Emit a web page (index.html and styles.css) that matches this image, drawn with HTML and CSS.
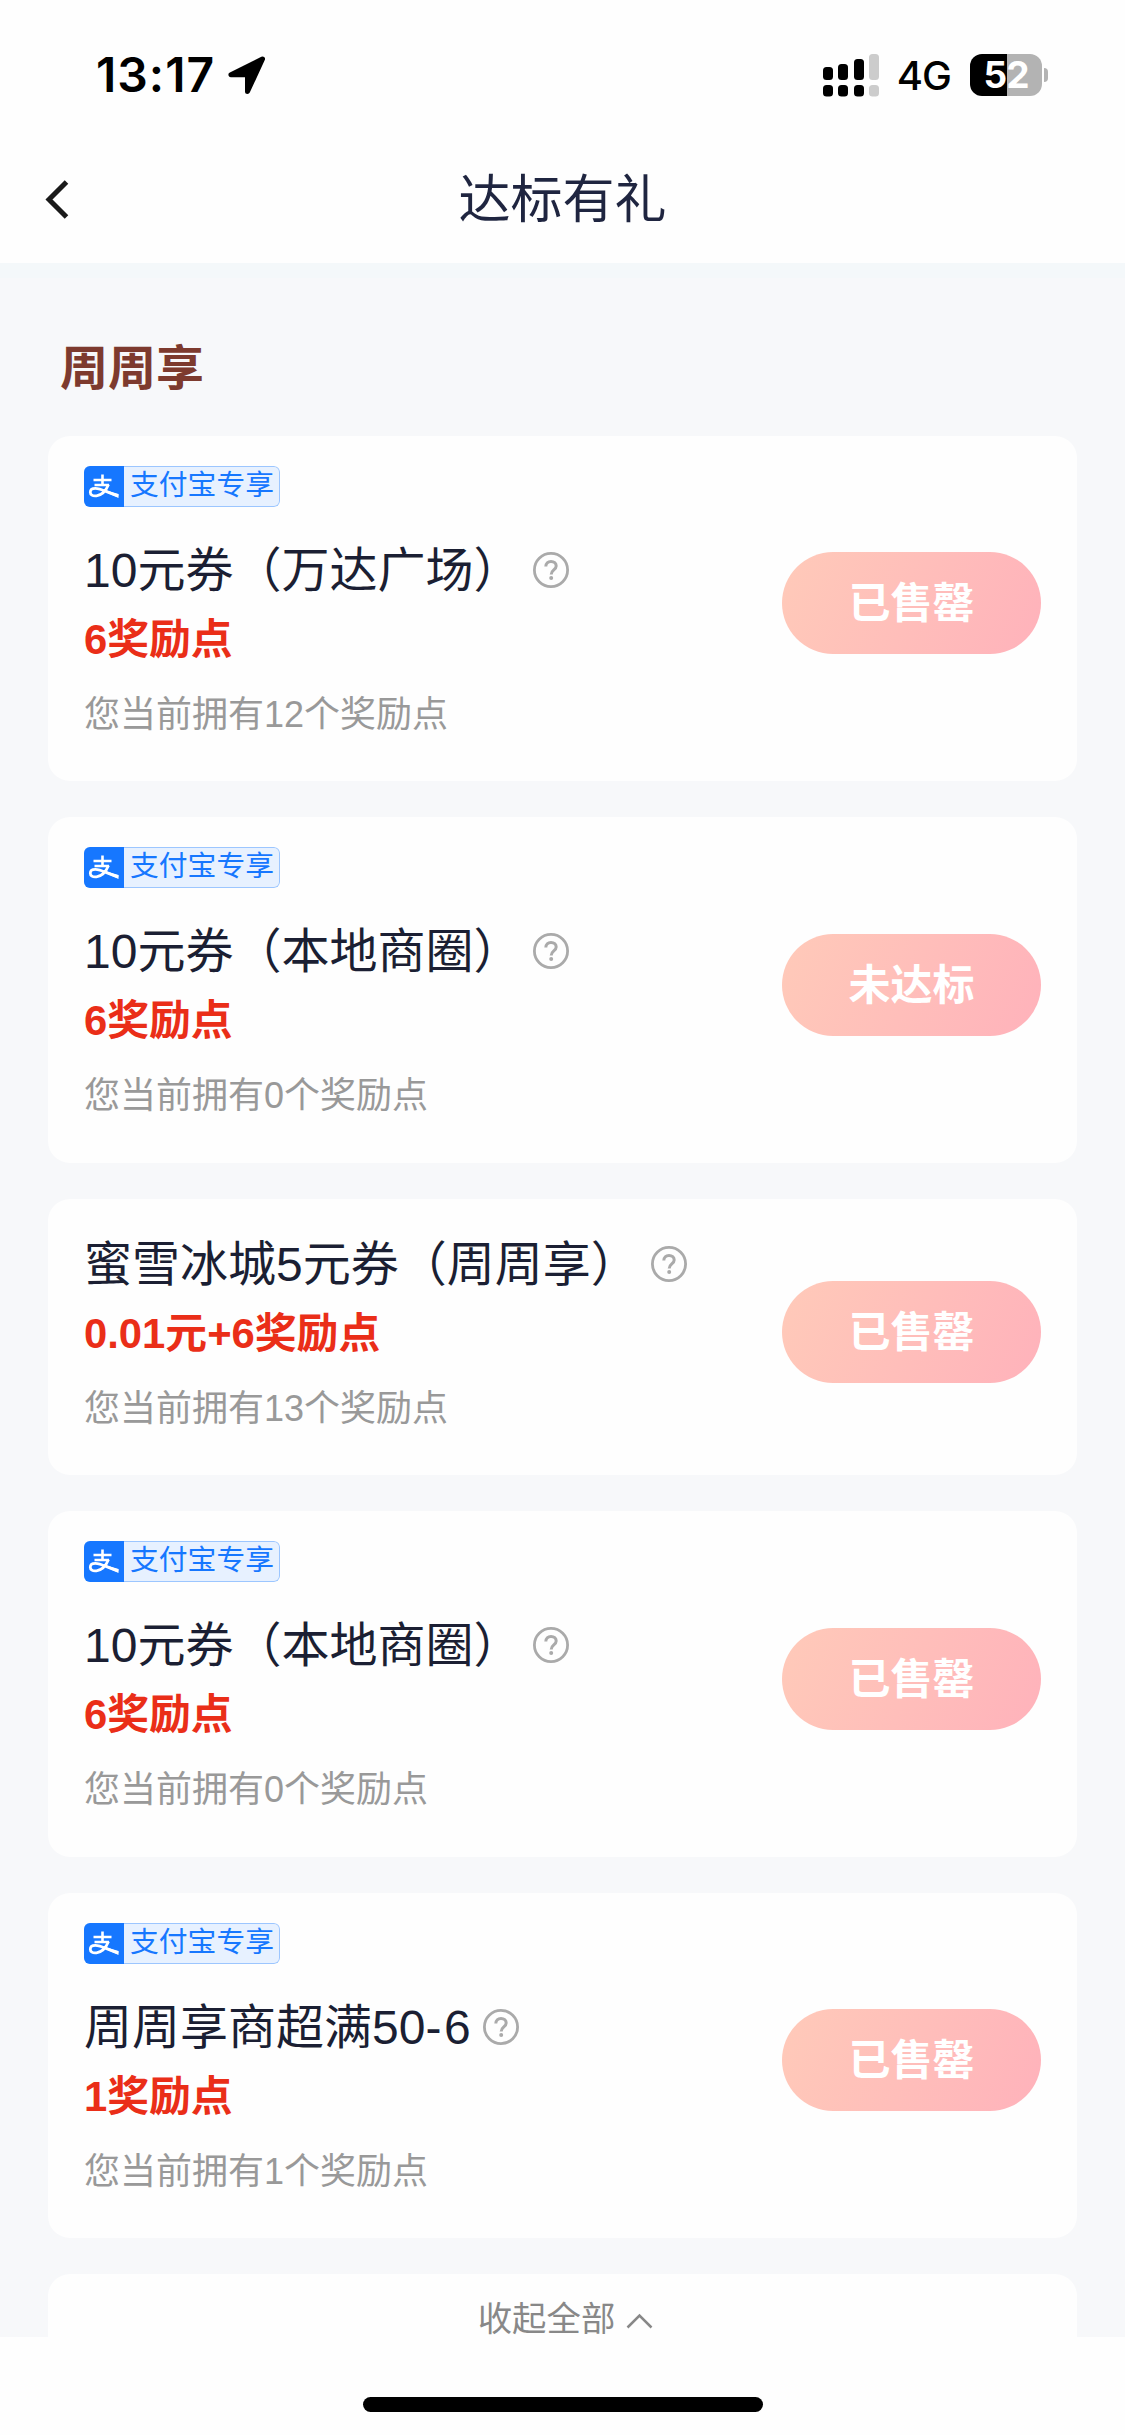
FILE: index.html
```html
<!DOCTYPE html>
<html lang="zh-CN">
<head>
<meta charset="utf-8">
<title>达标有礼</title>
<link rel="stylesheet" href="styles.css">
</head>
<body>
<svg class="defs" width="0" height="0">
  <symbol id="help" viewBox="0 0 36 36"><circle cx="18" cy="18" r="16.6" fill="none" stroke="#aaa" stroke-width="2.8"/><path d="M12.8 14.6c0-3.2 2.2-5.2 5.2-5.2s5.2 1.9 5.2 4.6c0 4-5 4-5 8.400" fill="none" stroke="#aaa" stroke-width="3"/><circle cx="18.200" cy="26" r="2" fill="#aaa"/></symbol>
  <symbol id="alipay" viewBox="0 0 40 41"><path d="M9.500 14h18M18.500 8.500v11M10.500 19h14.500" fill="none" stroke="#fff" stroke-width="2.600"/><path d="M24.500 18.500c-1.800 4.500-5.800 10.500-12 11.300-4 .5-6.200-1-6.200-3.600 0-2.300 2-3.800 5-3.800 6 0 12 4.300 23 7.500" fill="none" stroke="#fff" stroke-width="2.800"/><path d="M22 24.300 34.500 28v4l-13-6Z" fill="#fff"/></symbol>
</svg>
<header class="top">
  <div class="status">
    <div class="clock">13:17<svg class="loc" viewBox="0 0 38 38"><path d="M34.500 3 3 18.800H19.500V35.500Z" stroke="#000" stroke-width="5" stroke-linejoin="round"/></svg></div>
    <div class="signals">
      <svg class="bars" viewBox="0 0 56 43"><g fill="#000"><rect y="13" width="10" height="13" rx="3.500"/><rect x="15" y="10" width="10" height="16" rx="3.500"/><rect x="31" y="5" width="10" height="21" rx="3.500"/><rect y="31" width="10" height="11.500" rx="3.500"/><rect x="15" y="31" width="10" height="11.500" rx="3.500"/><rect x="31" y="31" width="10" height="11.500" rx="3.500"/></g><g fill="#ccc"><rect x="46" width="10" height="26" rx="3.500"/><rect x="46" y="31" width="10" height="11.500" rx="3.500"/></g></svg>
      <span class="net">4G</span>
      <span class="battery">52</span><span class="cap"></span>
    </div>
  </div>
  <div class="nav">
    <svg class="back" viewBox="0 0 24 39"><path d="M21.500 2 4 19.500 21.500 37" fill="none" stroke="#1a1a1a" stroke-width="5"/></svg>
    <h1 class="title">达标有礼</h1>
  </div>
</header>
<main class="page">
  <h2 class="section">周周享</h2>
  <article class="card">
    <div class="info">
      <div class="badge"><svg class="pay"><use href="#alipay"/></svg><span class="tag">支付宝专享</span></div>
      <h3 class="name">10元券（万达广场）<svg class="help"><use href="#help"/></svg></h3>
      <p class="points">6奖励点</p><p class="own">您当前拥有12个奖励点</p>
    </div>
    <button class="btn">已售罄</button>
  </article>
  <article class="card">
    <div class="info">
      <div class="badge"><svg class="pay"><use href="#alipay"/></svg><span class="tag">支付宝专享</span></div>
      <h3 class="name">10元券（本地商圈）<svg class="help"><use href="#help"/></svg></h3>
      <p class="points">6奖励点</p><p class="own">您当前拥有0个奖励点</p>
    </div>
    <button class="btn">未达标</button>
  </article>
  <article class="card plain">
    <div class="info">
      <h3 class="name">蜜雪冰城5元券（周周享）<svg class="help"><use href="#help"/></svg></h3>
      <p class="points">0.01元+6奖励点</p><p class="own">您当前拥有13个奖励点</p>
    </div>
    <button class="btn">已售罄</button>
  </article>
  <article class="card">
    <div class="info">
      <div class="badge"><svg class="pay"><use href="#alipay"/></svg><span class="tag">支付宝专享</span></div>
      <h3 class="name">10元券（本地商圈）<svg class="help"><use href="#help"/></svg></h3>
      <p class="points">6奖励点</p><p class="own">您当前拥有0个奖励点</p>
    </div>
    <button class="btn">已售罄</button>
  </article>
  <article class="card">
    <div class="info">
      <div class="badge"><svg class="pay"><use href="#alipay"/></svg><span class="tag">支付宝专享</span></div>
      <h3 class="name"><span>周周享商超满50<span class="dash">-</span>6</span><svg class="help"><use href="#help"/></svg></h3>
      <p class="points">1奖励点</p><p class="own">您当前拥有1个奖励点</p>
    </div>
    <button class="btn">已售罄</button>
  </article>
  <div class="fold">收起全部<svg class="up" viewBox="0 0 27 16"><path d="M1.500 14.500 13.500 2.500 25.500 14.500" fill="none" stroke="#888" stroke-width="2.500"/></svg></div>
</main>
<footer class="home"><div class="indicator"></div></footer>
</body>
</html>
```
FILE: styles.css
```css
* { box-sizing: border-box; margin: 0; padding: 0; }
body { width: 1125px; height: 2435px; overflow: hidden; display: flex; flex-direction: column; background: #fefefe; font-family: "Liberation Sans", "Noto Sans CJK SC", sans-serif; }
svg { display: block; flex: none; }
.defs { position: absolute; }
.top { height: 263px; flex: none; background: #fefefe; }
.status { height: 150px; display: flex; justify-content: space-between; padding: 0 76px 0 96px; }
.clock { display: flex; align-items: center; font: 600 48px/150px Inter, sans-serif; letter-spacing: 1px; color: #000; }
.loc { width: 38px; height: 38px; margin-left: 13px; }
.signals { display: flex; align-items: center; }
.bars { width: 56px; height: 43px; }
.net { margin-left: 18px; font: 500 40px/150px Inter, sans-serif; letter-spacing: -1px; padding-top: 2px; }
.battery { width: 72px; height: 42px; margin-left: 19px; border-radius: 12px; background: linear-gradient(90deg, #000 52%, #b3b3b3 52%); color: #fff; font: 700 37px/42px Inter, sans-serif; text-align: center; letter-spacing: -1px; }
.cap { width: 4px; height: 14px; margin: 0 1px 0 2px; border-radius: 0 7px 7px 0; background: #b3b3b3; }
.nav { height: 98px; display: grid; grid-template-columns: 200px 1fr 200px; align-items: center; }
.back { width: 24px; height: 39px; margin-left: 45px; }
.title { padding-top: 2px; text-align: center; font-size: 52px; line-height: 96px; font-weight: 400; color: #1f2540; }
.page { height: 2074px; flex: none; overflow: hidden; padding: 0 48px; background: linear-gradient(#f4f8fa 15px, #f7f8fa 15px); }
.section { height: 172.500px; padding: 71px 0 0 12px; font-size: 48px; line-height: 70px; font-weight: 600; color: #7d3a2e; }
.card { display: flex; justify-content: space-between; align-items: center; height: 345.700px; margin-bottom: 36px; padding: 0 36px; border-radius: 22px; background: #fefefe; }
.info { height: 100%; padding-top: 30px; }
.plain { height: 276px; }
.plain .info { padding-top: 31px; }
.badge { display: flex; width: 196px; height: 41px; margin-bottom: 29px; border-radius: 6px; overflow: hidden; background: #e7f1ff; }
.pay { width: 40px; height: 41px; background: #1677ff; }
.tag { flex: 1; padding-left: 6px; border: 1.500px solid #9cc6ff; border-left: 0; border-radius: 0 6px 6px 0; font-size: 28.800px; line-height: 37px; color: #1677ff; white-space: nowrap; }
.name { display: flex; align-items: center; height: 70px; font-size: 48px; line-height: 70px; font-weight: 400; color: #1b1f33; white-space: nowrap; }
.dash { letter-spacing: 2.700px; }
.help { width: 36px; height: 36px; margin: 0 0 2px 12px; }
.points { height: 68px; font-size: 41.800px; line-height: 67px; font-weight: 700; color: #ea2e18; }
.own { height: 70px; padding-top: 6px; font-size: 36px; line-height: 70px; color: #999; }
.btn { width: 259px; height: 102px; margin-bottom: 10px; padding-top: 1px; border: 0; border-radius: 51px; background: linear-gradient(112deg, #ffcab9, #ffb2bb); color: #fff; font: 600 42px/101px "Liberation Sans", "Noto Sans CJK SC", sans-serif; }
.fold { display: flex; justify-content: center; height: 63px; padding: 27px 0 0 6px; border-radius: 22px 22px 0 0; background: #fefefe; font-size: 34.400px; line-height: 36px; color: #888; }
.up { width: 27px; height: 16px; margin: 12px 0 0 11px; }
.home { flex: 1; display: flex; justify-content: center; padding-top: 60px; }
.indicator { width: 400px; height: 15px; border-radius: 8px; background: #000; }
```
